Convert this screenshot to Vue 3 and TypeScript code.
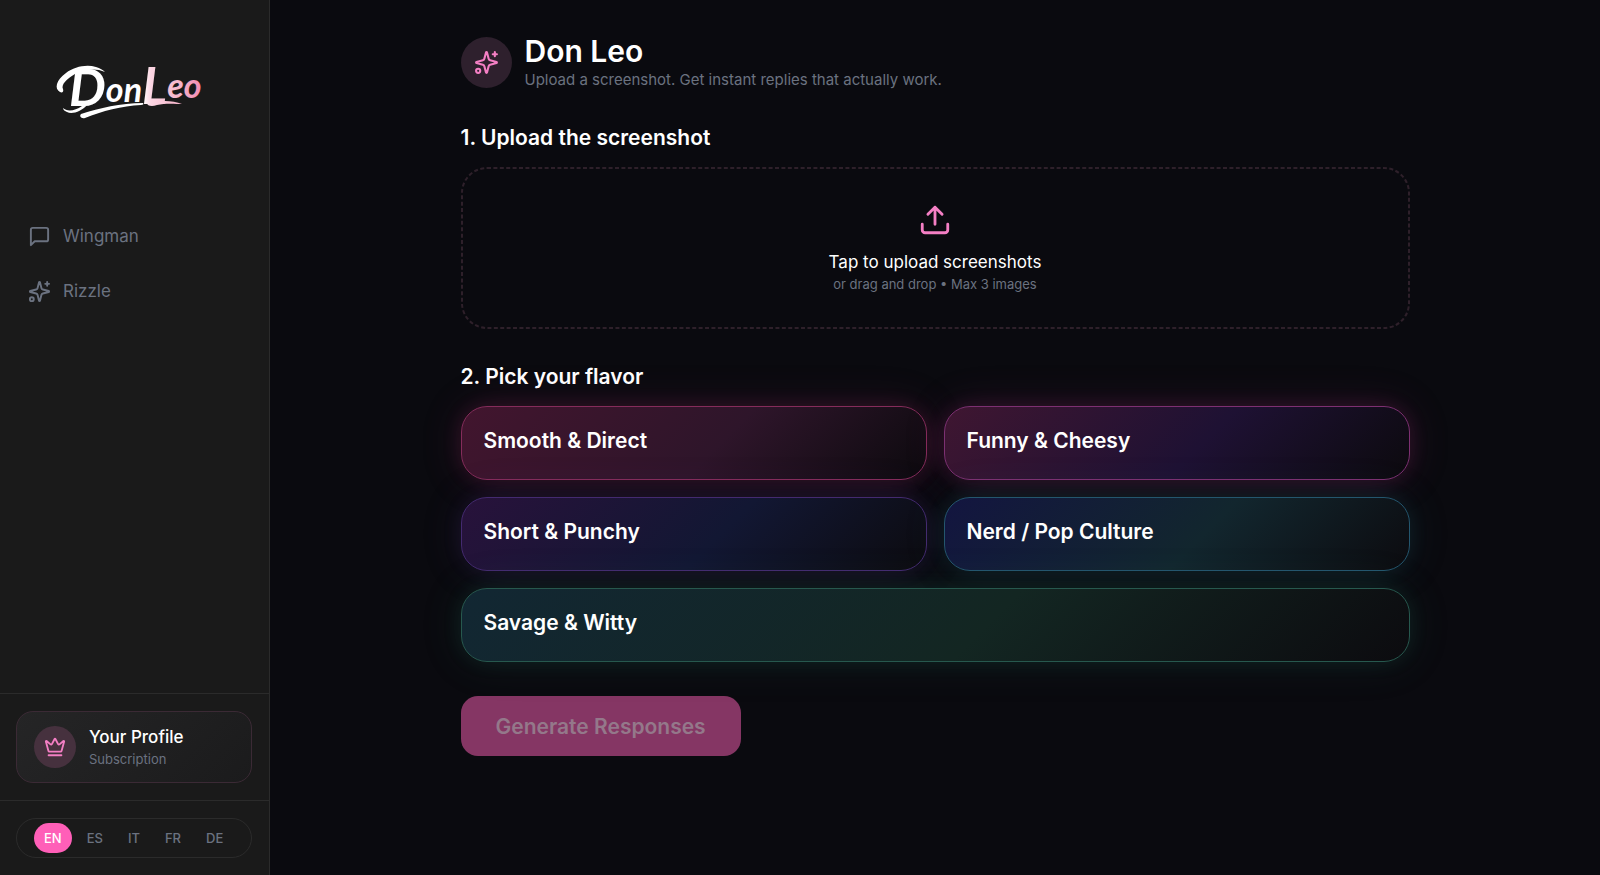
<script setup lang="ts">
import { ref } from 'vue'

interface Flavor {
  id: string
  label: string
}

const flavors: Flavor[] = [
  { id: 'smooth', label: 'Smooth & Direct' },
  { id: 'funny', label: 'Funny & Cheesy' },
  { id: 'short', label: 'Short & Punchy' },
  { id: 'nerd', label: 'Nerd / Pop Culture' },
  { id: 'savage', label: 'Savage & Witty' },
]

const languages: string[] = ['EN', 'ES', 'IT', 'FR', 'DE']
const language = ref('EN')
</script>

<template>
  <div class="layout">
    <aside class="sidebar">
      <a class="logo" href="#" aria-label="DonLeo">
        <svg class="wordmark" width="180" height="80" viewBox="0 0 180 80">
          <defs>
            <linearGradient id="logo-ink" gradientUnits="userSpaceOnUse" x1="16" y1="0" x2="160" y2="0">
              <stop offset="0" stop-color="#ffffff" />
              <stop offset="0.6" stop-color="#ffffff" />
              <stop offset="0.66" stop-color="#fbd5e2" />
              <stop offset="0.85" stop-color="#f6b6cb" />
              <stop offset="1" stop-color="#f48fb4" />
            </linearGradient>
          </defs>
          <g fill="url(#logo-ink)">
            <text class="logo-text" x="29" y="56"><tspan class="cap">D</tspan><tspan class="low" dy="-4">on</tspan><tspan class="cap" dy="2">L</tspan><tspan class="low" dy="-6">eo</tspan></text>
            <path d="M20 42C14 39 16 30 26 23C34 17 46 14 56 17C60 18 63 20 65 22C56 18 44 19 35 24C26 29 21 35 23 39C24 42 22 43 20 42Z" />
            <path d="M23 58C27 62 35 61 42 56L47 55C42 61 32 65 27 62C25 61 23 60 23 58Z" />
            <path d="M41 64C60 58 80 53 103 53C104 54 103 55 101 55C82 56 62 61 45 68C41 69 39 66 41 64Z" />
            <path d="M108 50C118 51 132 50 142 54C136 54 125 53 117 55C112 57 107 56 107 53Z" />
          </g>
        </svg>
      </a>

      <nav class="nav">
        <a class="nav-link" href="#">
          <svg class="icon nav-icon" viewBox="0 0 24 24">
            <path d="M21 15a2 2 0 0 1-2 2H7l-4 4V5a2 2 0 0 1 2-2h14a2 2 0 0 1 2 2z" />
          </svg>
          <span>Wingman</span>
        </a>
        <a class="nav-link" href="#">
          <svg class="icon nav-icon" viewBox="0 0 24 24">
            <path d="M9.937 15.5A2 2 0 0 0 8.5 14.063l-6.135-1.582a.5.5 0 0 1 0-.962L8.5 9.936A2 2 0 0 0 9.937 8.5l1.582-6.135a.5.5 0 0 1 .963 0L14.063 8.5A2 2 0 0 0 15.5 9.937l6.135 1.581a.5.5 0 0 1 0 .964L15.5 14.063a2 2 0 0 0-1.437 1.437l-1.582 6.135a.5.5 0 0 1-.963 0z" />
            <path d="M20 2v4M22 4h-4" />
            <circle cx="4" cy="20" r="2" />
          </svg>
          <span>Rizzle</span>
        </a>
      </nav>

      <div class="profile-area">
        <a class="profile" href="#">
          <span class="profile-badge">
            <svg class="icon crown" viewBox="0 0 24 24">
              <path d="M11.562 3.266a.5.5 0 0 1 .876 0L15.39 8.87a1 1 0 0 0 1.516.294L21.183 5.5a.5.5 0 0 1 .798.519l-2.834 10.246a1 1 0 0 1-.956.734H5.81a1 1 0 0 1-.957-.734L2.02 6.02a.5.5 0 0 1 .798-.519l4.276 3.664a1 1 0 0 0 1.516-.294z" />
              <path d="M5 21h14" />
            </svg>
          </span>
          <span class="profile-text">
            <span class="profile-name">Your Profile</span>
            <span class="profile-sub">Subscription</span>
          </span>
        </a>
      </div>

      <div class="language-area">
        <div class="languages" role="group" aria-label="Language">
          <button
            v-for="code in languages"
            :key="code"
            type="button"
            class="language"
            :class="{ active: code === language }"
            :aria-pressed="code === language"
            @click="language = code"
          >{{ code }}</button>
        </div>
      </div>
    </aside>

    <main class="main">
      <div class="content">
        <header class="header">
          <span class="header-badge">
            <svg class="icon header-icon" viewBox="0 0 24 24">
              <path d="M9.937 15.5A2 2 0 0 0 8.5 14.063l-6.135-1.582a.5.5 0 0 1 0-.962L8.5 9.936A2 2 0 0 0 9.937 8.5l1.582-6.135a.5.5 0 0 1 .963 0L14.063 8.5A2 2 0 0 0 15.5 9.937l6.135 1.581a.5.5 0 0 1 0 .964L15.5 14.063a2 2 0 0 0-1.437 1.437l-1.582 6.135a.5.5 0 0 1-.963 0z" />
              <path d="M20 2v4M22 4h-4" />
              <circle cx="4" cy="20" r="2" />
            </svg>
          </span>
          <div>
            <h1 class="title">Don Leo</h1>
            <p class="subtitle">Upload a screenshot. Get instant replies that actually work.</p>
          </div>
        </header>

        <section class="section">
          <h2 class="heading">1. Upload the screenshot</h2>
          <button type="button" class="dropzone">
            <svg class="outline" aria-hidden="true">
              <rect x="1" y="1" rx="25" />
            </svg>
            <svg class="icon upload-icon" viewBox="0 0 24 24">
              <path d="M12 3v12M17 8l-5-5-5 5" />
              <path d="M21 15v4a2 2 0 0 1-2 2H5a2 2 0 0 1-2-2v-4" />
            </svg>
            <span class="drop-title">Tap to upload screenshots</span>
            <span class="drop-hint">or drag and drop • Max 3 images</span>
          </button>
        </section>

        <section class="section">
          <h2 class="heading">2. Pick your flavor</h2>
          <div class="flavors">
            <button v-for="f in flavors" :key="f.id" type="button" class="flavor" :class="f.id">{{ f.label }}</button>
          </div>
        </section>

        <button type="button" class="generate" disabled>Generate Responses</button>
      </div>
    </main>
  </div>
</template>

<style>
body {
  margin: 0;
  background: #0a0a0f;
}
</style>

<style scoped>
.layout {
  display: flex;
  min-height: 100vh;
  font-family: Inter, "Liberation Sans", sans-serif;
  color: #ffffff;
  background: #0a0a0f;
}
.layout *,
.layout {
  box-sizing: border-box;
}
button {
  font-family: inherit;
  cursor: pointer;
}
a {
  color: inherit;
  text-decoration: none;
}
.icon {
  fill: none;
  stroke: currentColor;
  stroke-width: 2;
  stroke-linecap: round;
  stroke-linejoin: round;
  flex: none;
}
.sidebar {
  display: flex;
  flex-direction: column;
  flex: none;
  width: 270px;
  background: #1a1a1a;
  border-right: 1px solid #2b2b2b;
}
.logo {
  display: flex;
  margin: 50px 0 0 40px;
}
.wordmark {
  overflow: visible;
}
.logo-text {
  font-family: Lato, sans-serif;
  font-style: italic;
  font-weight: 700;
}
.cap {
  font-size: 52px;
}
.low {
  font-size: 34px;
}
.nav {
  display: flex;
  flex-direction: column;
  flex: 1;
  gap: 4px;
  padding: 81px 16px 0;
}
.nav-link {
  display: flex;
  align-items: center;
  gap: 12px;
  height: 51px;
  padding: 0 12px;
  font-size: 17px;
  line-height: 25px;
  color: #6b7280;
}
.nav-icon {
  width: 23px;
  height: 23px;
}
.profile-area {
  padding: 17px 17px 17px 16px;
  border-top: 1px solid #2b2b2b;
}
.profile {
  display: flex;
  align-items: center;
  gap: 13px;
  height: 72px;
  padding: 0 17px;
  border: 1px solid #3b2a35;
  border-radius: 17px;
  background: linear-gradient(135deg, #252526, #1b1b1c);
}
.profile-badge {
  display: flex;
  align-items: center;
  justify-content: center;
  width: 42px;
  height: 42px;
  border-radius: 50%;
  background: #46313e;
  color: #f47fc4;
}
.crown {
  width: 22px;
  height: 22px;
}
.profile-text {
  display: flex;
  flex-direction: column;
  padding-bottom: 1px;
}
.profile-name {
  font-size: 17px;
  line-height: 25px;
  font-weight: 500;
}
.profile-sub {
  font-size: 13px;
  line-height: 18px;
  color: #6b7280;
}
.language-area {
  padding: 17px 17px 17px 16px;
  border-top: 1px solid #2b2b2b;
}
.languages {
  display: flex;
  gap: 5px;
  padding: 4px 17px;
  border: 1px solid #2b2b2b;
  border-radius: 20px;
}
.language {
  height: 30px;
  padding: 0 10px;
  border: 0;
  border-radius: 15px;
  background: transparent;
  font-size: 13px;
  font-weight: 500;
  color: #6b7280;
}
.language.active {
  background: #ff5fb8;
  color: #ffffff;
}
.main {
  flex: 1;
  min-width: 0;
  padding: 37px 34px;
}
.content {
  max-width: 949px;
  margin: 0 auto;
}
.header {
  display: flex;
  gap: 13px;
}
.header-badge {
  display: flex;
  align-items: center;
  justify-content: center;
  flex: none;
  width: 51px;
  height: 51px;
  border-radius: 50%;
  background: #2e202d;
  color: #f47fc4;
}
.header-icon {
  width: 25px;
  height: 25px;
}
.title {
  margin: 0;
  font-size: 30px;
  line-height: 28px;
  font-weight: 600;
}
.subtitle {
  margin: 0;
  font-size: 15px;
  line-height: 30px;
  color: #6b7280;
}
.section {
  margin-bottom: 34px;
}
.header {
  margin-bottom: 29px;
}
.heading {
  margin: 0 0 15px;
  font-size: 21px;
  line-height: 28px;
  font-weight: 600;
}
.dropzone {
  position: relative;
  display: flex;
  flex-direction: column;
  align-items: center;
  width: 100%;
  padding: 36px 34px;
  border: 0;
  border-radius: 26px;
  background: transparent;
  color: #ffffff;
}
.outline {
  position: absolute;
  inset: 0;
  width: 100%;
  height: 100%;
}
.outline rect {
  width: calc(100% - 2px);
  height: calc(100% - 2px);
  fill: none;
  stroke: #2e202a;
  stroke-width: 2px;
  stroke-dasharray: 4 2.4;
}
.upload-icon {
  width: 34px;
  height: 34px;
  margin-bottom: 12px;
  color: #f47fc4;
}
.drop-title {
  font-size: 17px;
  line-height: 26px;
}
.drop-hint {
  font-size: 13px;
  line-height: 18px;
  color: #6b7280;
}
.flavors {
  display: grid;
  grid-template-columns: 1fr 1fr;
  gap: 17px;
}
.flavor {
  padding: 20px 22px 24px;
  border: 1px solid;
  border-radius: 26px;
  font-size: 21px;
  line-height: 28px;
  font-weight: 600;
  text-align: left;
  color: #ffffff;
}
.smooth {
  border-color: #852c5b;
  background: linear-gradient(135deg, #42152e, #2e152a 55%, #0c0a0e);
  box-shadow: 0 0 20px rgba(220, 50, 130, 0.14), 0 0 44px rgba(180, 60, 130, 0.15);
}
.funny {
  border-color: #7d3072;
  background: linear-gradient(135deg, #3f1631, #1e1133 55%, #0c0a0e);
  box-shadow: 0 0 20px rgba(220, 50, 150, 0.14), 0 0 44px rgba(180, 60, 140, 0.15);
}
.short {
  border-color: #442a70;
  background: linear-gradient(135deg, #28123b, #121733 55%, #0c0b0f);
  box-shadow: 0 0 20px rgba(120, 70, 200, 0.1), 0 0 44px rgba(110, 80, 160, 0.13);
}
.nerd {
  border-color: #24566e;
  background: linear-gradient(135deg, #131540, #12262e 55%, #0c0b0f);
  box-shadow: 0 0 20px rgba(40, 150, 170, 0.1), 0 0 44px rgba(60, 140, 150, 0.13);
}
.savage {
  grid-column: 1 / -1;
  border-color: #27584e;
  background: linear-gradient(135deg, #122733, #132622 55%, #0c0b0f);
  box-shadow: 0 0 20px rgba(40, 160, 120, 0.1), 0 0 44px rgba(60, 150, 120, 0.13);
}
.generate {
  display: block;
  height: 60px;
  padding: 0 35px;
  border: 0;
  border-radius: 17px;
  background: #853664;
  font-size: 21px;
  font-weight: 600;
  color: #94788a;
  cursor: default;
}
</style>
